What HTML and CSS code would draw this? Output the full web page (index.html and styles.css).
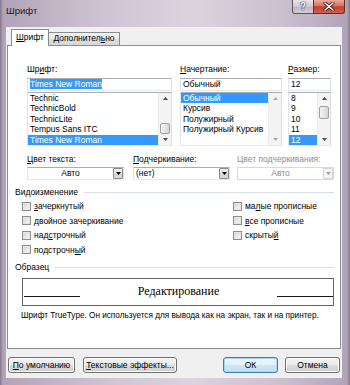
FILE: index.html
```html
<!DOCTYPE html>
<html lang="ru">
<head>
<meta charset="utf-8">
<title>Шрифт</title>
<link rel="stylesheet" href="styles.css">
</head>
<body>
<div class="window">
  <div class="titlebar">
    <span class="title">Шрифт</span>
    <div class="caption-btns">
      <div class="cbtn help">?</div>
      <div class="cbtn close">
        <svg width="12" height="9" viewBox="0 0 12 9"><path d="M2 1 L10 8 M10 1 L2 8" stroke="#3a2020" stroke-width="3.2" stroke-linecap="round"/><path d="M2 1 L10 8 M10 1 L2 8" stroke="#fff" stroke-width="1.6" stroke-linecap="round"/></svg>
      </div>
    </div>
  </div>
  <div class="client">
    <div class="tabs">
      <div class="tab active"><u>Ш</u>рифт</div>
      <div class="tab">Дополнител<u>ь</u>но</div>
    </div>
    <div class="panel">
      <div class="row1">
        <div class="field f-font">
          <div class="lbl">Шр<u>и</u>фт:</div>
          <div class="input"><span class="hl">Times New Roman</span></div>
          <div class="list">
            <div class="items">
              <div class="item">Technic</div>
              <div class="item">TechnicBold</div>
              <div class="item">TechnicLite</div>
              <div class="item">Tempus Sans ITC</div>
              <div class="item sel">Times New Roman</div>
            </div>
            <div class="vscroll">
              <div class="arr"><svg width="5" height="3" viewBox="0 0 5 3"><path d="M0 3 L2.5 0 L5 3Z" fill="#4a4a4a"/></svg></div>
              <div class="track"><div class="thumb thumb-font"></div></div>
              <div class="arr"><svg width="5" height="3" viewBox="0 0 5 3"><path d="M0 0 L2.5 3 L5 0Z" fill="#4a4a4a"/></svg></div>
            </div>
          </div>
        </div>
        <div class="field f-style">
          <div class="lbl"><u>Н</u>ачертание:</div>
          <div class="input">Обычный</div>
          <div class="list">
            <div class="items">
              <div class="item sel">Обычный</div>
              <div class="item">Курсив</div>
              <div class="item">Полужирный</div>
              <div class="item">Полужирный Курсив</div>
            </div>
            <div class="vscroll">
              <div class="arr"><svg width="5" height="3" viewBox="0 0 5 3"><path d="M0 3 L2.5 0 L5 3Z" fill="#a8a8a8"/></svg></div>
              <div class="track"></div>
              <div class="arr"><svg width="5" height="3" viewBox="0 0 5 3"><path d="M0 0 L2.5 3 L5 0Z" fill="#a8a8a8"/></svg></div>
            </div>
          </div>
        </div>
        <div class="field f-size">
          <div class="lbl"><u>Р</u>азмер:</div>
          <div class="input">12</div>
          <div class="list">
            <div class="items">
              <div class="item">8</div>
              <div class="item">9</div>
              <div class="item">10</div>
              <div class="item">11</div>
              <div class="item sel">12</div>
            </div>
            <div class="vscroll">
              <div class="arr"><svg width="5" height="3" viewBox="0 0 5 3"><path d="M0 3 L2.5 0 L5 3Z" fill="#4a4a4a"/></svg></div>
              <div class="track"><div class="thumb thumb-size"></div></div>
              <div class="arr"><svg width="5" height="3" viewBox="0 0 5 3"><path d="M0 0 L2.5 3 L5 0Z" fill="#4a4a4a"/></svg></div>
            </div>
          </div>
        </div>
      </div>

      <div class="row2">
        <div class="field f-color">
          <div class="lbl2"><u>Ц</u>вет текста:</div>
          <div class="dropdown">
            <div class="dd-text center">Авто</div>
            <div class="dd-btn"><svg width="5" height="3" viewBox="0 0 5 3"><path d="M0 0 L2.5 3 L5 0Z" fill="#000"/></svg></div>
          </div>
        </div>
        <div class="field f-under">
          <div class="lbl2"><u>П</u>одчеркивание:</div>
          <div class="dropdown">
            <div class="dd-text">(нет)</div>
            <div class="dd-btn"><svg width="5" height="3" viewBox="0 0 5 3"><path d="M0 0 L2.5 3 L5 0Z" fill="#000"/></svg></div>
          </div>
        </div>
        <div class="field f-ucolor disabled">
          <div class="lbl2">Цвет подчеркивания:</div>
          <div class="dropdown">
            <div class="dd-text center">Авто</div>
            <div class="dd-btn"><svg width="5" height="3" viewBox="0 0 5 3"><path d="M0 0 L2.5 3 L5 0Z" fill="#a0a0a0"/></svg></div>
          </div>
        </div>
      </div>

      <div class="group group-mod"><span>Видоизменение</span><div class="rule"></div></div>
      <div class="checks">
        <div class="col col-left">
          <div class="check"><span class="box"></span><span><u>з</u>ачеркнутый</span></div>
          <div class="check"><span class="box"></span><span>двойное зачеркивание</span></div>
          <div class="check"><span class="box"></span><span>над<u>с</u>трочный</span></div>
          <div class="check"><span class="box"></span><span>подстрочн<u>ы</u>й</span></div>
        </div>
        <div class="col">
          <div class="check"><span class="box"></span><span>ма<u>л</u>ые прописные</span></div>
          <div class="check"><span class="box"></span><span><u>в</u>се прописные</span></div>
          <div class="check"><span class="box"></span><span>скрыты<u>й</u></span></div>
        </div>
      </div>

      <div class="group group-sample"><span>Образец</span><div class="rule"></div></div>
      <div class="sample">
        <div class="sline"></div>
        <div class="stext">Редактирование</div>
        <div class="sline"></div>
      </div>
      <div class="info">Шрифт TrueType. Он используется для вывода как на экран, так и на принтер.</div>
    </div>

    <div class="buttons">
      <div class="btn b-default"><u>П</u>о умолчанию</div>
      <div class="btn b-effects"><u>Т</u>екстовые эффекты...</div>
      <div class="btn b-ok">ОК</div>
      <div class="btn b-cancel">Отмена</div>
    </div>
  </div>
</div>
</body>
</html>
```

FILE: styles.css
```css
* { box-sizing: border-box; }

body {
  margin: 0;
  width: 350px;
  height: 385px;
  overflow: hidden;
  font-family: "Liberation Sans", Arial, sans-serif;
  font-size: 8.5px;
  color: #000;
  background: #c2b6c6;
}

u { text-decoration: underline; text-underline-offset: 1px; }

.window {
  display: flex;
  flex-direction: column;
  height: 385px;
  background:
    linear-gradient(to right, #85768c 0, #b2a4b8 3px, #cfc4d3 30%, #ddd3df 55%, #cbc1cf 80%, #b2a4b8 calc(100% - 3px), #85768c 100%);
}

.titlebar {
  height: 27px;
  flex: none;
  display: flex;
  justify-content: space-between;
  align-items: flex-start;
  padding-left: 6px;
}

.title {
  margin-top: 5px;
  line-height: 12px;
  font-size: 9.5px;
  color: #1b1b1b;
}

.caption-btns {
  display: flex;
  margin-right: 5px;
}

.cbtn {
  height: 14px;
  border: 1px solid #5c5661;
  border-top: none;
  display: flex;
  align-items: center;
  justify-content: center;
}

.help {
  width: 22px;
  border-radius: 0 0 0 3px;
  background: linear-gradient(#e9e4eb, #cfc7d3 50%, #bdb3c2 51%, #d4ccd7);
  color: #fff;
  font-weight: bold;
  font-size: 10px;
  line-height: 12px;
  text-shadow: 0 0 1px #333, 0 0 1px #333, 0 0 1px #333;
}

.close {
  width: 32px;
  margin-left: -1px;
  border-radius: 0 0 3px 0;
  background: linear-gradient(#e9a99f, #d9735f 45%, #c4412c 52%, #d0604c 100%);
  border-color: #6a2a25;
}

.client {
  flex: 1;
  margin: 0 8px 7px 6px;
  background: #f0f0f0;
  display: flex;
  flex-direction: column;
}

.tabs {
  display: flex;
  align-items: flex-start;
  height: 16px;
  margin-top: 2px;
  padding-left: 5px;
}

.tab {
  height: 13px;
  margin-top: 3px;
  margin-left: -1px;
  border: 1px solid #898c95;
  border-bottom: none;
  background: linear-gradient(#f2f2f2, #e8e8e8 50%, #dcdcdc 51%, #d8d8d8);
  line-height: 11px;
  text-align: center;
  width: 72px;
}

.tab.active {
  position: relative;
  z-index: 1;
  width: 38px;
  height: 17px;
  margin-top: 0;
  margin-left: 0;
  background: #fff;
  line-height: 14px;
}

.panel {
  height: 304px;
  margin: 0 1px;
  background: #fff;
  border: 1px solid #898c95;
  padding: 18px 6px 0 7px;
}

.row1 {
  display: flex;
  padding-left: 12px;
}

.f-font { width: 145px; margin-right: 8px; }
.f-style { width: 102px; margin-right: 6px; }
.f-size { width: 43px; }

.lbl {
  height: 11px;
  line-height: 11px;
  margin-bottom: 3px;
}

.input {
  height: 13px;
  border: 1px solid #abadb3;
  border-color: #abadb3 #dbdfe6 #e3e9ef #e2e3ea;
  line-height: 11px;
  padding-left: 2px;
  white-space: nowrap;
}

.hl {
  background: #3399ff;
  color: #fff;
}

.list {
  margin-top: 1px;
  height: 54px;
  border: 1px solid #abadb3;
  border-color: #abadb3 #dbdfe6 #e3e9ef #e2e3ea;
  display: flex;
}

.items {
  flex: 1;
  overflow: hidden;
}

.item {
  height: 10.4px;
  line-height: 10.4px;
  padding-left: 2px;
  white-space: nowrap;
}

.item.sel {
  background: #3399ff;
  color: #fff;
}

.vscroll {
  width: 13px;
  flex: none;
  display: flex;
  flex-direction: column;
  background: #f4f4f4;
  border-left: 1px solid #eaeaea;
}

.arr {
  height: 11px;
  display: flex;
  align-items: center;
  justify-content: center;
}

.track {
  flex: 1;
  display: flex;
  flex-direction: column;
  padding: 0 1px;
}

.thumb {
  height: 11px;
  border: 1px solid #a0a0a0;
  border-radius: 2px;
  background: linear-gradient(to right, #f4f4f4, #e6e6e6 50%, #d6d6d6);
}

.thumb-font { margin-top: 19px; }
.thumb-size { margin-top: 2px; height: 13px; }

.row2 {
  display: flex;
  padding-left: 12px;
  margin-top: 8px;
}

.f-color { width: 97px; margin-right: 9px; }
.f-under { width: 97px; margin-right: 7px; }
.f-ucolor { width: 97px; }

.lbl2 {
  height: 11px;
  line-height: 11px;
  margin-bottom: 2px;
  white-space: nowrap;
}

.dropdown {
  height: 13px;
  border: 1px solid #abadb3;
  border-color: #abadb3 #dbdfe6 #e3e9ef #e2e3ea;
  display: flex;
  background: #fff;
}

.dd-text {
  flex: 1;
  line-height: 11px;
  padding-left: 2px;
}

.dd-text.center {
  text-align: center;
  padding-left: 0;
}

.dd-btn {
  width: 10px;
  height: 11px;
  border: 1px solid #8a8a8a;
  border-radius: 1px;
  background: linear-gradient(#f3f3f3, #e1e1e1 50%, #d0d0d0 51%, #dcdcdc);
  display: flex;
  align-items: center;
  justify-content: center;
}

.disabled .lbl2,
.disabled .dd-text { color: #8d8d8d; }
.disabled .dropdown { border-color: #d9d9d9; }
.disabled .dd-btn { border-color: #d5d5d5; background: #f4f4f4; }

.group {
  display: flex;
  align-items: center;
  height: 11px;
  line-height: 11px;
}

.group .rule {
  flex: 1;
  height: 1px;
  background: #d5dfe5;
  margin-left: 6px;
}

.group-mod { margin-top: 6.5px; }
.group-sample { margin-top: 4.5px; }

.checks {
  display: flex;
  padding-left: 7px;
  margin-top: 1.5px;
}

.col-left { width: 211px; }

.check {
  height: 14.5px;
  display: flex;
  align-items: center;
  white-space: nowrap;
}

.box {
  width: 9px;
  height: 9px;
  flex: none;
  margin-right: 3px;
  border: 1px solid #8f8f8f;
  background: linear-gradient(135deg, #cfcfcf, #ececec 60%, #f8f8f8);
  box-shadow: inset 0 0 0 1px #e6e6e6;
}

.sample {
  margin: 5.5px 0 0 7px;
  width: 312px;
  height: 28px;
  border: 1px solid #646464;
  display: flex;
  align-items: flex-start;
  padding: 0 0 0 1px;
}

.sline {
  width: 56px;
  height: 1px;
  background: #1a1a1a;
  margin-top: 17px;
}

.stext {
  flex: 1;
  text-align: center;
  font-family: "Liberation Serif", "Times New Roman", serif;
  font-size: 12px;
  line-height: 14px;
  margin-top: 5px;
}

.info {
  margin-top: 4px;
  padding-left: 6px;
  line-height: 11px;
  font-size: 8.2px;
  white-space: nowrap;
}

.buttons {
  display: flex;
  margin-top: 8px;
  padding-left: 2px;
}

.btn {
  height: 16px;
  border: 1px solid #707070;
  border-radius: 3px;
  background: linear-gradient(#f2f2f2, #ebebeb 50%, #dddddd 51%, #cfcfcf);
  box-shadow: inset 0 0 0 1px #fcfcfc;
  line-height: 14px;
  text-align: center;
  white-space: nowrap;
}

.b-default { width: 67px; }
.b-effects { width: 94px; margin-left: 8px; }
.b-ok {
  width: 55px;
  margin-left: 46px;
  border-color: #3c7fb1;
  background: linear-gradient(#eef7fc, #e0f0fa 50%, #cbe6f7 51%, #c2e0f4);
  box-shadow: inset 0 0 0 1px #a6d8f6;
}
.b-cancel { width: 55px; margin-left: 7px; }
```
